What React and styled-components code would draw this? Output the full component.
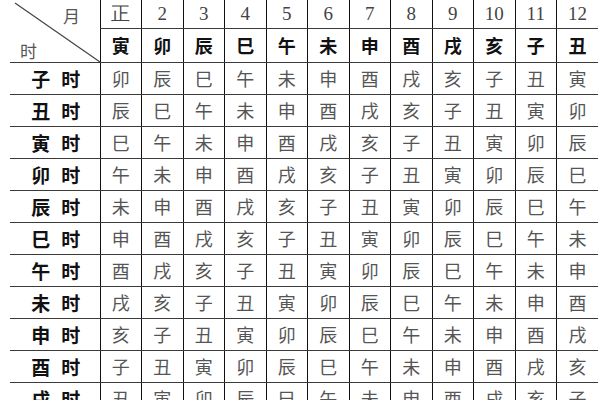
import React from 'react';
import styled, { createGlobalStyle } from 'styled-components';

const GlobalStyle = createGlobalStyle`
  html, body {
    margin: 0;
    padding: 0;
    background: #fff;
    overflow: hidden;
  }
  body {
    width: 600px;
    height: 400px;
    font-family: "Noto Sans CJK SC", "Liberation Sans", sans-serif;
  }
`;

const Page = styled.div`
  width: 600px;
  height: 400px;
  padding-left: 10px;
  box-sizing: border-box;
  overflow: hidden;
`;

const Table = styled.table`
  border-collapse: collapse;
  table-layout: fixed;
  width: 588px;
`;

const Cell = styled.td`
  padding: 0;
  text-align: center;
  vertical-align: middle;
  border-left: 1px solid #111;
  border-bottom: 1px solid #3a3a3a;
  line-height: 1;
  overflow: hidden;
  white-space: nowrap;
`;

const CornerCell = styled.td`
  position: relative;
  padding: 0;
  border-bottom: 1px solid #3a3a3a;
  font-size: 17px;
  color: #555;
`;

const CornerLine = styled.svg`
  position: absolute;
  left: 0;
  top: 0;
  width: 90px;
  height: 62px;
`;

const CornerMonth = styled.span`
  position: absolute;
  left: 53px;
  top: 3px;
`;

const CornerHour = styled.span`
  position: absolute;
  left: 10px;
  top: 38px;
`;

const MonthCell = styled(Cell)`
  font-family: "Liberation Serif", serif;
  font-size: 19px;
  color: #444;
`;

const BranchCell = styled(Cell)`
  font-size: 18px;
  font-weight: 700;
  color: #111;
`;

const RowHead = styled.td`
  padding: 0;
  border-bottom: 1px solid #3a3a3a;
  font-size: 19px;
  font-weight: 700;
  color: #111;
`;

const HeadText = styled.span`
  display: flex;
  justify-content: center;
  gap: 11px;
  padding-left: 2px;
`;

const DataCell = styled(Cell)`
  font-size: 18px;
  color: #555;
`;

const HeadRow = styled.tr`
  height: ${(p) => p.$h}px;
`;

const BodyRow = styled.tr`
  height: 32px;
`;

const branches = ['子', '丑', '寅', '卯', '辰', '巳', '午', '未', '申', '酉', '戌', '亥'];
const months = ['正', '2', '3', '4', '5', '6', '7', '8', '9', '10', '11', '12'];

export default function App() {
  return (
    <>
      <GlobalStyle />
      <Page>
        <Table>
          <colgroup>
            <col style={{ width: 90 }} />
            {months.map((m) => (
              <col key={m} style={{ width: 41.5 }} />
            ))}
          </colgroup>
          <thead>
            <HeadRow $h={28}>
              <CornerCell rowSpan={2}>
                <CornerLine viewBox="0 0 90 62">
                  <line x1="5" y1="3" x2="90" y2="62" stroke="#444" strokeWidth="1.2" />
                </CornerLine>
                <CornerMonth>月</CornerMonth>
                <CornerHour>时</CornerHour>
              </CornerCell>
              {months.map((m) => (
                <MonthCell key={m}>{m}</MonthCell>
              ))}
            </HeadRow>
            <HeadRow $h={34}>
              {months.map((m, j) => (
                <BranchCell key={m}>{branches[(j + 2) % 12]}</BranchCell>
              ))}
            </HeadRow>
          </thead>
          <tbody>
            {branches.slice(0, 11).map((b, i) => (
              <BodyRow key={b}>
                <RowHead>
                  <HeadText>
                    <span>{b}</span>
                    <span>时</span>
                  </HeadText>
                </RowHead>
                {months.map((m, j) => (
                  <DataCell key={m}>{branches[(i + j + 3) % 12]}</DataCell>
                ))}
              </BodyRow>
            ))}
          </tbody>
        </Table>
      </Page>
    </>
  );
}
